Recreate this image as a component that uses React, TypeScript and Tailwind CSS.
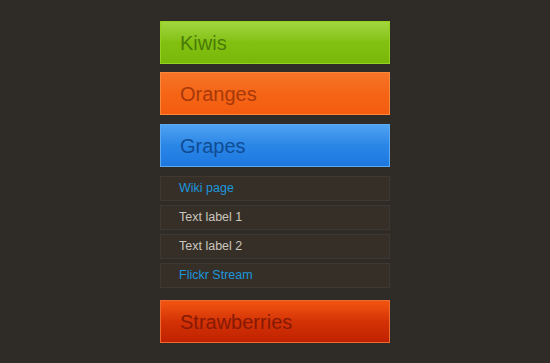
export default function App() {
  const big = 'h-[43px] flex items-center pl-[19px] border text-[20px] leading-none'
  const small = 'h-[25px] flex items-center pl-[18px] border border-[#3f3830] bg-[#352f28] text-[12.5px] leading-none'

  return (
    <div className="w-[550px] h-[363px] bg-[#2f2b26] font-['Liberation_Sans',Arial,sans-serif] overflow-hidden">
      <div className="ml-[160px] w-[230px] pt-[21px] flex flex-col">
        <div className={`${big} border-[#94d21e] bg-gradient-to-b from-[#a2d63c] via-[#82c010] to-[#78b80a] text-[#4a7a08]`}>
          Kiwis
        </div>
        <div className={`${big} mt-[8px] border-[#f7883c] bg-gradient-to-b from-[#f57426] via-[#f56516] to-[#f45c10] text-[#a8380a]`}>
          Oranges
        </div>
        <div className={`${big} mt-[9px] border-[#5eaaf2] bg-gradient-to-b from-[#4fa2f2] via-[#2a86e6] to-[#1c78e0] text-[#104c94]`}>
          Grapes
        </div>
        <div className="mt-[9px] flex flex-col gap-[4px]">
          <div className={`${small} text-[#1c96dc]`}>Wiki page</div>
          <div className={`${small} text-[#cbc6bd]`}>Text label 1</div>
          <div className={`${small} text-[#cbc6bd]`}>Text label 2</div>
          <div className={`${small} text-[#1c96dc]`}>Flickr Stream</div>
        </div>
        <div className={`${big} mt-[12px] border-[#ee6a30] bg-gradient-to-b from-[#f25510] via-[#d43206] to-[#c02200] text-[#861a04]`}>
          Strawberries
        </div>
      </div>
    </div>
  )
}
